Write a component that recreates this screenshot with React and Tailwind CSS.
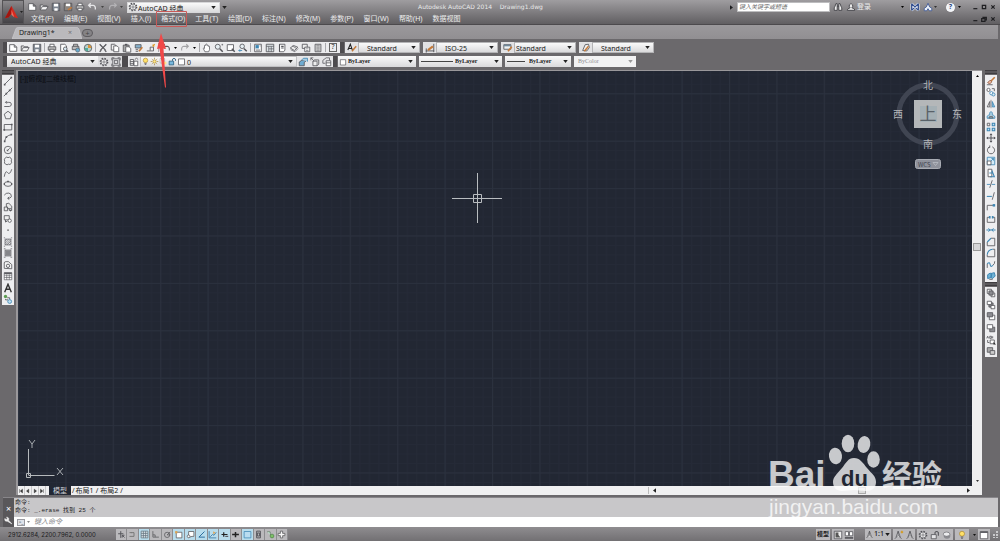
import React from "react";

const K = "#55555a";
const B = "#3f87b4";
const O = "#c47a3a";

const P = ({ d, c = K, f = "none", w = 1 }) => <path d={d} stroke={c} fill={f} strokeWidth={w} />;

const ICONS = {
  new: <P d="M2 2h5.5l3 3v5H2zM7.5 2v3h3" f="#fff" />,
  open: <><P d="M1.5 9.5v-6h3l1 1h4v1.5" f="#ddd" /><P d="M1.5 9.5l2.5-4h7l-2.500 4z" f="#f4f4f4" /></>,
  save: <><P d="M1.500 1.500h9v9h-9z" f="#7d8590" /><path d="M3.500 2h5v3.500h-5zM4 7.500h4v3H4z" fill="#fff" /></>,
  saveas: <><P d="M1.500 1.500h9v9h-9z" f="#8b8580" /><path d="M3.500 2h5v3h-5z" fill="#fff" /><P d="M6 9.500l4.500-3" c={O} w={2} /></>,
  print: <><P d="M3.500 5V1.500h5V5" f="#fff" /><P d="M1.500 4.500h9v4h-9z" f="#bbb" /><P d="M3.500 7.500h5v3h-5z" f="#fff" /></>,
  preview: <><P d="M2 1.500h5l2 2v7H2z" f="#fff" /><circle cx="7.500" cy="7" r="2.200" fill="#dcebf3" stroke={K} /><P d="M9 8.500l2 2" w={1.500} /></>,
  publish: <><P d="M3 4V1.500h5V4M1.500 4h8v4h-8z" f="#bbb" /><circle cx="8" cy="8.500" r="2.500" fill="#67a9cc" stroke={K} strokeWidth=".7" /></>,
  dwf: <><circle cx="6" cy="6" r="4.500" fill="#b6d2cf" stroke={K} /><path d="M6 6V2a4 4 0 0 1 4 4z" fill="#d9943b" /><path d="M2 6h4v4a4 4 0 0 1-4-4z" fill="#5a9" /></>,
  cut: <P d="M2 1.500l7 7M10 1.500l-7 7M2 10.500l2-2M10 10.500l-2-2" w={1.500} />,
  copy: <><P d="M1.500 1.500h4l2 2v5h-6z" f="#eee" /><P d="M4.500 3.500h4l2 2v5h-6z" f="#fff" /></>,
  paste: <><P d="M1.500 2.500h7v8h-7z" f="#aaa" /><P d="M4.500 4.500h4l2 2v4.500h-6z" f="#fff" /><P d="M3.500 2h3" w={2} /></>,
  match: <><P d="M1.500 2h7v4h-7z" f="#86b1cc" /><P d="M10 5L6 10" c={O} w={2} /><P d="M2 8h3M2 10h3" /></>,
  block: <><P d="M1 9.500h8V5H5v4" /><P d="M8 4l2.500-2.500M10 4l-2-2" c="#df9a22" w={1.300} /></>,
  undo: <P d="M4.500 1.500L2 4l2.500 2.500M2 4h5.500q3 .5 2.500 5" w={1.300} />,
  undoL: <P d="M4.500 1.500L2 4l2.500 2.500M2 4h5.500q3 .5 2.500 5" c="#e6e6e8" w={1.600} />,
  redo: <P d="M7.500 1.500L10 4l-2.500 2.500M10 4H4.500q-3 .5-2.500 5" c="#a2a2a5" w={1.300} />,
  redoL: <P d="M7.500 1.500L10 4l-2.500 2.500M10 4H4.500q-3 .5-2.500 5" c="#b4b3b6" w={1.400} />,
  pan: <P d="M3.500 10.500L1.500 6.500q.5-1 1.500 0V3q.8-1 1.500 0V1.800q.8-1 1.500 0V3q.8-.8 1.500 0v1q1-.8 1.500 0v4l-1 2.500z" f="#fff" w={0.900} />,
  zoomrt: <><circle cx="4.500" cy="4.500" r="3" fill="#e6eef2" stroke={K} /><P d="M7 7l3.500 3.500" w={1.800} /><P d="M9 2h2M10 1v2" w={0.700} /></>,
  zoomwin: <><P d="M1.500 2h7.500v7H1.500z" f="#fff" /><P d="M7 7l3.500 3.500" w={1.800} /></>,
  zoomprev: <><circle cx="5" cy="4" r="2.700" fill="#e6eef2" stroke={K} /><P d="M7 6.500l3.500 3.500" w={1.800} /><P d="M1 9h4M1 9l1.500-1.500M1 9l1.500 1.500" c={B} /></>,
  props: <><P d="M2 1.500h8v9H2z" f="#fff" /><path d="M3 2.500h4v4H3z" fill={B} /><P d="M3.500 8.500h5M8 3.500h1" /></>,
  dc: <><P d="M1.500 1.500h9v9h-9z" f="#dce3e6" /><P d="M1.500 4h9M4.500 4v6.500M7.500 4v6.500M4.500 7h6" w={0.800} /></>,
  palettes: <><P d="M3 1.500h6.500v7L8 10.500H3z" f="#fff" /><P d="M5 4h3M5 6h3M3 1.500v9" w={1.300} /></>,
  sheet: <><P d="M1.500 6l4-3 5 2-4 4z" f="#eee" /><P d="M2 8l5 2.500 4-4M4 3.500l5 3" w={0.800} /></>,
  markup: <><P d="M1.500 1.500h6v5h-6z" f="#eee" /><P d="M4.500 5h6v5.500h-6z" f="#fff" /><P d="M6 7h3M6 9h3" w={0.700} /></>,
  calc: <><P d="M2.500 1.500h7v9h-7z" f="#ddd" /><P d="M4 3.500h4M4 6h4M4 8.500h4" w={0.900} /></>,
  gear: <><circle cx="6" cy="6" r="4.300" fill="none" stroke={K} strokeWidth="1.800" strokeDasharray="1.700 1.677" /><circle cx="6" cy="6" r="3.500" fill="#fff" stroke={K} strokeWidth=".9" /><circle cx="6" cy="6" r="1.400" fill="none" stroke={K} strokeWidth=".9" /></>,
  ws: <><P d="M2 2h8v8H2z" w={0.800} /><P d="M1 4V1h3M8 1h3v3M11 8v3H8M4 11H1V8M4 4h4v4H4z" /></>,
  layers: <><P d="M1.500 3h4v7h-4zM1.500 5.500h4M1.500 8h4" f="#eee" /><P d="M6 5h4.500v5.500H6zM7 3l2-1.500 2 1.500" f="#fff" /></>,
  bulb: <><circle cx="6" cy="4.500" r="3" fill="#ffe169" stroke="#a8822a" strokeWidth=".8" /><P d="M4.500 8.500h3M5 10h2" /></>,
  sun: <><circle cx="6" cy="6" r="2.200" fill="#ffe789" stroke="#9c7b28" strokeWidth=".8" /><P d="M6 1v1.500M6 9.500V11M1 6h1.500M9.500 6H11M2.500 2.500l1 1M8.500 8.500l1 1M9.500 2.500l-1 1M3.500 8.500l-1 1" c="#9c7b28" /></>,
  vp: <><P d="M1.500 2h6v6h-6z" c="#aaa" f="#fff" /><circle cx="8" cy="8" r="2" fill="#ffe789" /></>,
  lock: <><P d="M1.500 5.500h6v5h-6z" c="#275b7c" f="#78b8dd" /><P d="M6 5V3q2-2.500 4 0v2" c="#275b7c" w={1.300} /></>,
  lockG: <><P d="M1.500 5.500h6v5h-6z" f="#e4e4e6" /><P d="M6 5V3q2-2.500 4 0v4" w={1.300} /></>,
  sq: <P d="M2 2.500h8v8H2z" f="#fff" />,
  lay1: <><P d="M1.500 6l3-2h6l-3 2.500v4h-6z" f="#6fabd0" /><P d="M4.500 3.500l2-2h5v4" f="#a9cde2" c={B} /></>,
  lay2: <><P d="M3.500 5l2-1.500h5v5L8.500 10.500h-5z" f="#eee" /><P d="M3.500 5h5v5.500M1 1h3M1 1v3M1 1l3 3" w={0.900} /></>,
  lay3: <><P d="M5 4.500h5.500v6H5zM5 7h5.500" f="#fff" /><P d="M1 7.500h3M1 7.500V4l4-3h4v3" w={0.900} /></>,
  textstyle: <><P d="M1 8.500L4 1.500l2.500 7M2 6.500h4" c="#222" w={1.300} /><P d="M11 4L6 10" c={O} w={1.800} /></>,
  dimstyle: <><P d="M1 9.500h10M1.500 6.500v5M10.500 1v10" w={1.100} /><P d="M9.500 4L3.500 8.500" c={O} w={2.500} /></>,
  tablestyle: <><P d="M1 2h8.500v5.500H1z" f="#eef3f5" /><P d="M1 3h8.500" w={2} c="#71899a" /><P d="M10.500 4.500L6 10" c={O} w={2} /></>,
  mlstyle: <><P d="M2 9l3-7 4-.5 1 4-3 4z" f="#eee" /><P d="M9 4L4 10" c={O} w={1.800} /></>,
  line: <><P d="M2 10l8-8" /><path d="M1 9.300h2v2H1zM9 1h2v2H9z" fill={K} /></>,
  xline: <><P d="M1 11L11 1" /><path d="M3 7h2v2H3zM7 3h2v2H7z" fill={K} /></>,
  pline: <P d="M1.500 9h6q3-.5 2.500-3T7 4H3M4.500 2.500L3 4l1.500 1.500" />,
  polygon: <P d="M6 1.500l4.500 3.500-1.800 5.500H3.300L1.500 5z" />,
  rect: <><P d="M1.500 3h9v6.500h-9z" /><path d="M.5 8.500h2v2h-2zM9.500 2h2v2h-2z" fill={K} /></>,
  arc: <><P d="M2 10q1-7 8-8" /><path d="M1 9h2v2H1zM3 4h2v2H3zM9 1h2v2H9z" fill={K} /></>,
  circle: <><circle cx="6" cy="6" r="4.500" fill="none" stroke={K} /><P d="M5 7l3-3M5 5.500v1.500h1.500" /></>,
  cloud: <P d="M3 2q1.500-1.500 3 0 2-1.500 3.500.5Q11 4.500 9.800 6q1.200 1.500 0 3-1.300 2-3.300.8-1.500 1.500-3.500 0Q1 8.500 2 6.500 .8 3.500 3 2z" />,
  spline: <P d="M1.500 10.500Q3 2 5.500 5.500T10.500 1.500" />,
  ellipse: <><ellipse cx="6" cy="6" rx="4.500" ry="2.800" fill="none" stroke={K} /><path d="M.7 5h1.800v2H.7zM9.500 5h1.800v2H9.500zM5 2.200h2v1.600H5z" fill={K} /></>,
  earc: <P d="M1.500 5q2-3 5.500-2.500T10 7q-1.500 2-4 1.800M7.500 7L5.500 8.800l2 1.500" />,
  insert: <><P d="M4 5V2l3-.5L10.500 5v3H6zM1.500 6h4v4.500h-4z" f="#e7e7e7" /><P d="M7 9l2 1.500L11 9" w={1.300} /></>,
  mkblock: <><P d="M1.500 2h6v5h-6z" f="#eee" /><circle cx="8" cy="8" r="2" fill="#fff" stroke={K} /><P d="M3 9h2M3 7v3" /></>,
  point: <path d="M5.300 5.300h1.500v1.500H5.300z" fill="#333" />,
  hatch: <><P d="M2.500 2.500h7v7h-7zM1 1h1.500M9.500 1H11M1 11h1.500M9.500 11H11M2.500 5l2.500-2.500M2.500 7.500l5-5M3 9.500l6.500-6.500M5 9.500l4.500-4.500M7.500 9.500l2-2" w={0.800} /></>,
  gradient: <><path d="M3 3h6v6H3z" fill="#86868a" /><P d="M2.500 2.500h7v7h-7zM1 1h2M9 1h2M1 11h2M9 11h2" w={0.900} /></>,
  region: <><P d="M1.500 10V3.500q0-1.500 2-1.500h3l4 3.500v5z" f="#f6f6f6" /><circle cx="6" cy="7" r="2" fill="none" stroke={K} /></>,
  table: <><P d="M1.500 2h9v8.500h-9zM1.500 5h9M1.500 7.700h9M4.500 4v6.500M7.500 4v6.500" f="#fff" w={0.800} /><P d="M1.500 2.700h9" w={1.700} /></>,
  mtext: <P d="M2 11L6 1.500l4 9.500M3.500 7.500h5" c="#333" w={1.700} />,
  addsel: <><circle cx="3" cy="3" r="2" fill="#5d9d51" /><P d="M5 4.500h3v2M3 6v1h3" /><circle cx="8" cy="9" r="2.300" fill="#bfe1f2" stroke={B} /></>,
  erase: <><P d="M10.500 1.500L6 6" c={O} w={2} /><P d="M2 8l3-3 2 2-2.500 2.500z" f="#eeb9a0" c="#8b543c" /><P d="M1 10.500h7" /></>,
  ccopy: <><circle cx="3" cy="3.500" r="1.900" fill="#fff" stroke={K} /><circle cx="6.500" cy="7.500" r="2" fill="#fff" stroke={B} /><circle cx="9" cy="9" r="1.800" fill="#d5ebf6" stroke={B} /><P d="M7 2h3v3" /></>,
  mirror: <><P d="M4.500 3v6.500H1.500z" f="#eee" /><P d="M7.500 3v6.500h3z" c={B} f="#8ec4e1" /><P d="M6 1v10" w={0.700} /></>,
  offset: <><P d="M1.500 10q-1-4 3-4V3q1.500-2 3 0v3q4 .5 3 4z" c={B} f="#b9d9e9" /><P d="M3.500 9.500q0-2 2.500-2t2.500 2z" /></>,
  array: <><P d="M1.500 1.500h3v3h-3z" /><P d="M7.500 1.500h3v3h-3zM1.500 7.500h3v3h-3zM7.500 7.500h3v3h-3z" c={B} f="#bfe0f0" w={1.300} /></>,
  move: <P d="M6 1v10M1 6h10M4.700 2.500L6 1l1.300 1.500M4.700 9.500L6 11l1.300-1.500M2.500 4.700L1 6l1.500 1.300M9.500 4.700L11 6 9.500 7.300" w={1.200} />,
  rotate: <P d="M7.500 2.200A4.300 4.300 0 1 1 4.500 2.200M4.500 .5v2.500H2.500" />,
  scale: <><P d="M1.500 1.500h9v9h-9z" c={B} f="#d4ebf7" /><P d="M1.500 6h4.500v4.500H1.500z" f="#fff" /><P d="M6 6l3-3M6.500 3H9v2.500" c={B} /></>,
  stretch: <><P d="M2.500 1.500H7v9H2.500z" f="#fff" /><P d="M7 3l3 7.500H5M4 6h4" c={B} w={1.300} /></>,
  trim: <><P d="M1 6.500h4M7 6.500h4" c={B} /><P d="M4.500 10.500l3-9" /></>,
  extend: <><P d="M1 6.500h6" c={B} w={1.300} /><P d="M7.500 10.500L10 1.500" /></>,
  brk1: <><P d="M1.500 10V4h8" /><path d="M8 2.500h3v3H8z" fill={B} /></>,
  brk: <><P d="M4 4H1.500v6h9V4H8" /><path d="M3.500 2.500h2v3h-2zM7 2.500h2v3H7z" fill={B} /></>,
  join: <P d="M.5 6h11M3 4l2 2-2 2M9 4L7 6l2 2" c={B} w={1.200} />,
  chamfer: <><P d="M1.500 10.500V6M6 1.500h4.500v9h-9" /><P d="M1.500 6L6 1.500" c={B} w={1.300} /></>,
  fillet: <><P d="M1.500 10.500V8M8 1.500h2.500v9h-9" /><P d="M1.500 8Q2 2 8 1.500" c={B} w={1.300} /></>,
  blend: <><P d="M1.500 9.500V4.500M8.500 6Q10.500 5 10.500 1.500" /><P d="M1.500 4.500q3-3 3.500 1t3.500.5" c={B} w={1.300} /></>,
  explode: <><P d="M2 4.500l3-2 2 1.500-1 4-4 1zM6 3l4-1 1 4-3 3-2-1z" c={B} f="#70b3d6" w={1.200} /><P d="M4 10h4" /></>,
  ord1: <><P d="M1.500 1.500h5v5h-5zM6 6h4.500v4.500H6z" f="#fff" /><P d="M3.500 3.500h5v5h-5z" f="#8c8c91" /></>,
  ord2: <><P d="M3.500 3.500h5v5h-5z" f="#8c8c91" /><P d="M1.500 1.500h5v4h-5zM6 6.500h4.500v4H6z" f="#fff" /></>,
  ord3: <><P d="M4 5h6.500v5.500H4z" f="#fff" /><P d="M1.500 2h6.500v5H1.500z" f="#8c8c91" /></>,
  ord4: <><P d="M4.500 5h6v5.500h-6z" f="#8c8c91" /><P d="M1.500 2h6.500v5H1.500z" f="#fff" /></>,
  ord5: <><P d="M1 4l1-2.500 1 2.500M4.500 1.500v2.500h2v-2.500zM8 1.500v2.500" /><P d="M5 6h5v4.500H5zM2 6v3h2" f="#fff" /><path d="M9 8.500l3 3H9z" fill="#222" /></>,
  ord6: <><P d="M1.500 2h6.500v5.500H1.500z" f="#aaa" /><P d="M5 5.500h5.500v4.500H5z" f="#ccc" /></>,
  infer: <P d="M5 1.500v9M1.500 5h7M7 7l3 3M7 10V7h3" w={1.300} />,
  snap: <P d="M2 3.500h6v5H2M4 3.500h1" w={1.300} c="#777" />,
  grid: <P d="M1.500 1.500h9v9h-9zM4.500 1.500v9M7.500 1.500v9M1.500 4.500h9M1.500 7.500h9" c="#61717c" f="#dbe6ec" />,
  ortho: <P d="M2.500 1.500v8h8M2.500 6.500H5.500v3" />,
  polar: <><circle cx="5.500" cy="6.500" r="3.500" fill="none" stroke={K} /><P d="M5.500 6.500l4-4M5.500 6.500h4" /></>,
  osnap: <><P d="M3 3h7.500v7.500H3z" f="#fff" /><path d="M1.500 1.500h3v3h-3z" fill="#e0a24b" /></>,
  osnap3: <><P d="M3.500 2h7v6.500L8 8.500 3.500 10z" f="#fff" /><circle cx="3.500" cy="8.500" r="1.800" fill="#fff" stroke={K} /></>,
  otrack: <P d="M10 2L2.500 9.500H10.500" c="#2a6d9c" w={1.300} />,
  ducs: <><P d="M1.500 1.500v9h9.500M3 9l3-3 2 1 3-4" c="#2a6d9c" /><path d="M7 1.500l3 2-3 2z" fill="#e0a24b" /></>,
  dyn: <><P d="M2 6h8M5 3v6" c="#222" w={1.600} /><P d="M7 8.500h4" w={1.500} /></>,
  lwt: <P d="M1.500 6h9M6 2.500v7" c="#222" w={2} />,
  tpy: <P d="M1.500 2h9v8.500h-9z" c={B} f="#b9dcf0" />,
  qp: <P d="M3.500 1.500h5v9h-5zM4.500 4h3v4h-3z" w={1.300} />,
  sc: <><P d="M1.500 2.500h4v3l2 2" f="#dfe" c="#57745a" /><circle cx="8" cy="8" r="2.500" fill="#7cc266" stroke="#41763a" strokeWidth=".8" /></>,
  am: <P d="M4.500 1.500h3v3h3v3h-3v3h-3v-3h-3v-3h3z" f="#f6f6f6" />,
  qv1: <><P d="M1.500 1.500h9v9h-9z" f="#eee" /><path d="M3 3h3.500v3L9 9H3z" fill="#555" /></>,
  qv2: <><P d="M1.500 2h4v5h-4zM6.500 2h4v5h-4z" f="#fff" /><P d="M1 9.500h10" w={2} /></>,
  anno: <P d="M6 1.500v5M6 6.500L2 10.500M6 6.500l4 4M3.500 8.500L6 1.500l2.500 7" f="#eee" />,
  annoy: <><P d="M5 1.500v5M5 6.500l-4 4M5 6.500l4 4M2.500 8.500L5 1.500l2.500 7" f="#eee" /><P d="M8 2.500h3M9.500 1v3" c="#d49b1f" w={1.600} /></>,
  cube: <><ellipse cx="6" cy="7" rx="4" ry="3.500" fill="#8b8b90" /><ellipse cx="5.500" cy="5" rx="4" ry="2.500" fill="#ececee" stroke={K} strokeWidth=".7" /></>,
  max: <><P d="M1.500 2h9v8.500h-9z" f="#fff" /><P d="M1.500 2.700h9" w={1.600} /></>,
  binoc: <P d="M2.500 5L3.500 2h1.500v8H1.500V7zM9.500 5L8.500 2H7v8h3.500V7zM5 5h2" f="#eee" c="#3b3b40" />,
  user: <P d="M4 3.500q2-3.500 4 0Q8.500 6 7 7q4 .5 3.500 3h-9Q1.500 7.500 5 7 3.500 6 4 3.500z" f="#e8e8e8" c="#3b3b40" />,
  xchg: <><P d="M2 2l8 8M10 2l-8 8M2 2v8M10 2v8" c="#dfe6f2" w={3} /><P d="M2 2l8 8M10 2l-8 8M2 2v8M10 2v8" c="#34508f" w={1.500} /></>,
  a360: <P d="M6 1.500l2 4.500 2.500 1.500v3H7.500L6 8l-1.500 2.500h-3v-3L4 6z" f="#e9eff8" c="#3d5795" />,
  wrench: <P d="M10.500 10.500L6 5.500Q7.500 2 3.500 1.500L4.500 3.500l-1.500 1-2-1q-.5 4 3.500 3.500z" c="#eee" f="#eee" w={0.800} />,
};

const Icon = ({ n, className = "size-[11px]" }) => (
  <svg viewBox="0 0 12 12" className={"shrink-0 " + className} aria-hidden="true">{ICONS[n]}</svg>
);

const Btn = ({ n, className = "w-3 h-[11px]", size }) => (
  <button type="button" aria-label={n} className={"flex shrink-0 items-center justify-center " + className}>
    <Icon n={n} className={size || "size-[10px]"} />
  </button>
);

const Caret = ({ className = "text-[#222]" }) => (
  <svg viewBox="0 0 6 4" className={"h-[3px] w-[5px] shrink-0 " + className} aria-hidden="true">
    <path d="M0 0h6L3 4z" fill="currentColor" />
  </svg>
);

const SmallCaret = ({ className = "text-[#333]" }) => (
  <svg viewBox="0 0 6 4" className={"h-[2px] w-[3px] shrink-0 " + className} aria-hidden="true">
    <path d="M0 0h6L3 4z" fill="currentColor" />
  </svg>
);

const Sep = () => <span className="mx-px h-[9px] w-px shrink-0 bg-[#a9a9ad]" />;
const Grip = ({ className = "w-1" }) => <span className={"h-[11px] shrink-0 bg-[#4d4b4e] " + className} />;

function Combo({ label, value, className, text = "text-[7px]", pad = "pl-1", children, disabled }) {
  return (
    <span
      className={
        "flex h-[11px] shrink-0 items-center pr-[3px] " +
        (disabled ? "bg-[#f2f2f3] text-[#8d8d90] " : "bg-linear-to-b from-[#fafafa] to-[#dadadc] text-[#222] ") +
        className
      }
    >
      {children}
      <select
        aria-label={label}
        disabled={disabled}
        defaultValue={value}
        className={"h-full min-w-0 flex-1 appearance-none bg-transparent leading-[11px] outline-none " + text + " " + pad}
      >
        <option>{value}</option>
      </select>
      <Caret className={disabled ? "text-[#999]" : "text-[#222]"} />
    </span>
  );
}

const Rule = ({ className }) => <span className={"h-px shrink-0 bg-[#444] " + className} />;

const MENUS = ["文件(F)", "编辑(E)", "视图(V)", "插入(I)", "格式(O)", "工具(T)", "绘图(D)", "标注(N)", "修改(M)", "参数(P)", "窗口(W)", "帮助(H)", "数据视图"];
const STD = [["new", "open", "save"], ["print", "preview", "publish", "dwf"], ["cut", "copy", "paste", "match", "block"]];
const STD2 = [["pan", "zoomrt", "zoomwin", "zoomprev"], ["props", "dc", "palettes", "sheet", "markup", "calc"]];
const DRAW = ["line", "xline", "pline", "polygon", "rect", "arc", "circle", "cloud", "spline", "ellipse", "earc", "insert", "mkblock", "point", "hatch", "gradient", "region", "table", "mtext", "addsel"];
const MODIFY = ["erase", "ccopy", "mirror", "offset", "array", "move", "rotate", "scale", "stretch", "trim", "extend", "brk1", "brk", "join", "chamfer", "fillet", "blend", "explode"];
const ORDER = ["ord1", "ord2", "ord3", "ord4", "ord5", "ord6"];
const MODES = [["infer", 0], ["snap", 0], ["grid", 1], ["ortho", 0], ["polar", 0], ["osnap", 1], ["osnap3", 1], ["otrack", 1], ["ducs", 1], ["dyn", 1], ["lwt", 0], ["tpy", 1], ["qp", 0], ["sc", 0], ["am", 0]];
const STYLES = [["textstyle", "Standard", "文字样式", "pl-2"], ["dimstyle", "ISO-25", "标注样式", "pl-2"], ["tablestyle", "Standard", "表格样式", "pl-px"], ["mlstyle", "Standard", "多重引线样式", "pl-2"]];

function WindowButtons({ restore }) {
  return (
    <div className="flex items-center gap-[3px] text-[#1f1f22]">
      {["M2 7h6", restore ? "M1 4h5v4H1zM3 4V2h5v4H6" : "M2 2h5v5H2z", "M2 2l5 5M7 2L2 7"].map((d, i) => (
        <button key={i} type="button" aria-label={["最小化", "还原", "关闭"][i]} className="size-[6px]">
          <svg viewBox="0 0 9 9" className="size-[6px]">
            <path d={d} fill="none" stroke="currentColor" strokeWidth="1.800" />
          </svg>
        </button>
      ))}
    </div>
  );
}

function Header() {
  return (
    <header className="flex h-[25px] shrink-0 border-b border-[#4c4a4d] bg-linear-to-b from-[#9f9da0] to-[#615f62]">
      <button type="button" aria-label="应用程序菜单" className="ml-[2px] flex h-6 w-[22px] items-center justify-center gap-px border border-[#555356] bg-linear-to-b from-[#8b898c] to-[#444246]">
        <svg viewBox="0 0 16 16" className="size-[15px]">
          <path d="M8 1L1 14l4-1 3-4 3 4 4 1z" fill="#d42a20" />
          <path d="M8 1L1 14l4-1 3-4z" fill="#a01610" />
          <path d="M8 5l3 8-3-2.500z" fill="#f2705f" />
        </svg>
        <SmallCaret className="text-[#222]" />
      </button>
      <div className="flex min-w-0 flex-1 flex-col pr-1">
        <div className="flex h-[14px] items-center">
          <div className="flex items-center pl-[2px]">
            {["new", "open", "save", "saveas", "print", "undoL"].map((n) => <Btn key={n} n={n} className="h-3 w-[12px]" />)}
            <SmallCaret className="mx-[3px] text-[#444]" />
            <Btn n="redoL" className="h-3 w-3" />
            <SmallCaret className="mr-[4px] ml-px text-[#444]" />
          </div>
          <Combo label="工作空间" value="AutoCAD 经典" className="w-[93px] border border-[#d7d7d9]" pad="pl-0"><Icon n="gear" className="size-[10px]" /></Combo>
          <Caret className="ml-[2px] text-[#222]" />
          <h1 className="flex-1 pl-1 text-center font-['DejaVu_Sans','Noto_Sans_CJK_SC',sans-serif] text-[6px] leading-[14px] whitespace-pre text-[#e9e9ea]">Autodesk AutoCAD 2014    Drawing1.dwg</h1>
          <svg viewBox="0 0 4 6" className="h-[5px] w-[3px]"><path d="M0 0l4 3-4 3z" fill="#1c1c1e" /></svg>
          <input aria-label="搜索" placeholder="键入关键字或短语" className="ml-1 h-[10px] w-[93px] border border-[#bdbdbf] bg-white px-px text-[6px] italic outline-none placeholder:text-[#666]" />
          <Btn n="binoc" className="ml-px w-[13px]" />
          <Btn n="user" className="w-[13px]" />
          <button type="button" className="text-[7px] text-[#ececed]">登录</button>
          <SmallCaret className="mr-[4px] ml-[30px]" />
          <Btn n="xchg" className="w-[13px]" />
          <Btn n="a360" className="w-[13px]" />
          <SmallCaret />
          <button type="button" aria-label="帮助" className="mr-[3px] ml-[9px] flex size-[9px] items-center justify-center rounded-full border border-white bg-[#eef2f8] text-[7px] font-bold text-[#26457f]">?</button>
          <SmallCaret className="mr-[11px]" />
          <WindowButtons />
        </div>
        <div className="flex h-[11px] items-center justify-between">
          <nav className="flex gap-[10px] pl-[7px] font-['Liberation_Sans','Noto_Sans_CJK_SC',sans-serif] text-[7px] leading-[10px] text-[#ededee]">
            {MENUS.map((m) => (
              <button key={m} type="button" className="whitespace-nowrap">{m}</button>
            ))}
          </nav>
          <WindowButtons restore />
        </div>
      </div>
    </header>
  );
}

function DrawingTabs() {
  return (
    <div className="mr-[2px] flex h-[14px] shrink-0 items-end bg-linear-to-b from-[#9b999c] to-[#918f92] pl-3">
      <div className="relative flex h-[12px] w-[70px] items-center">
        <svg viewBox="0 0 70 12" preserveAspectRatio="none" className="absolute inset-0 size-full">
          <path d="M0 12L4 1.500Q5 0 7 0H63Q66 0 67 2L70 12z" fill="#bab9bc" stroke="#d0cfd1" strokeWidth=".6" />
        </svg>
        <button type="button" className="relative flex-1 pl-[7px] text-left text-[7px] leading-3 text-[#222]">Drawing1*</button>
        <button type="button" aria-label="关闭" className="relative mr-[10px] text-[7px] leading-3 text-[#707073]">×</button>
      </div>
      <button type="button" aria-label="新建" className="mb-[2px] flex h-[8px] w-[11px] items-center justify-center rounded-sm border border-[#5d5b5e] bg-[#858386] text-[7px] leading-none text-[#444]">+</button>
    </div>
  );
}

function Toolbars() {
  const bold = "text-[6px] font-bold font-['Liberation_Serif',serif]";
  return (
    <div className="flex shrink-0 flex-col gap-[3px] bg-[#6b696c] pt-[3px] pb-[3px] pl-[3px]">
      <div className="flex">
        <Grip />
        <div className="flex h-[11px] items-center bg-[#ececee] pr-px">
          {STD.map((g, i) => <React.Fragment key={i}>{g.map((n) => <Btn key={n} n={n} />)}<Sep /></React.Fragment>)}
          <Btn n="undo" /><SmallCaret className="mx-[2px]" /><Btn n="redo" /><SmallCaret className="mx-[2px]" /><Sep />
          {STD2.map((g, i) => <React.Fragment key={i}>{g.map((n) => <Btn key={n} n={n} />)}<Sep /></React.Fragment>)}
          <button type="button" aria-label="帮助" className="flex h-[11px] w-3 items-center justify-center"><span className="flex h-[9px] w-2 items-center justify-center border border-[#666] text-[7px] text-[#333]">?</span></button>
        </div>
        <Grip className="mr-px w-[4px]" />
        <div className="flex gap-[3px]">
          {STYLES.map(([ic, v, l, p], i) => (
            <div key={i} className="flex bg-[#e2e2e4]">
              <Btn n={ic} className="h-[11px] w-[13px]" />
              <Combo label={l} value={v} className="w-[62px] border border-[#b4b4b6]" pad={p} />
            </div>
          ))}
        </div>
      </div>
      <div className="flex">
        <Grip />
        <Combo label="工作空间工具栏" value="AutoCAD 经典" className="w-[91px]" pad="pl-1" />
        <div className="flex bg-[#dcdcde]"><Btn n="gear" /><Btn n="ws" /></div>
        <Grip className="w-[6px]" />
        <div className="flex bg-[#e6e6e8]"><Btn n="layers" />
          <Combo label="图层" value="0" className="w-[157px] border border-[#c0c0c2]" pad="pl-px">
            {["bulb", "sun", "vp", "lock", "sq"].map((n) => <Icon key={n} n={n} className="size-[9px]" />)}
          </Combo>
          <Btn n="lay1" /><Btn n="lay2" /><Btn n="lay3" />
        </div>
        <Grip className="mr-px w-[4px]" />
        <div className="flex gap-[3px]">
          <Combo label="颜色" value="ByLayer" className="w-[78px]" text={bold} pad="pl-px"><Icon n="sq" className="ml-px size-2" /></Combo>
          <Combo label="线型" value="ByLayer" className="w-[83px]" text={bold} pad="pl-[2px]"><Rule className="ml-[2px] w-8" /></Combo>
          <Combo label="线宽" value="ByLayer" className="w-[66px]" text={bold} pad="pl-1"><Rule className="ml-[2px] w-[18px]" /></Combo>
          <Combo label="打印样式" value="ByColor" className="w-[62px]" text="text-[6px] font-['Liberation_Serif',serif]" pad="pl-1" disabled />
        </div>
      </div>
    </div>
  );
}

function SideBar({ groups, className }) {
  return (
    <aside className={"flex shrink-0 flex-col " + className}>
      {groups.map(([h, list], i) => (
        <div key={i}>
          <div className="mb-px h-1 border-y border-[#3f3d40] bg-[#5a585b]" />
          <div className={"flex flex-col bg-[#eeeef0] " + h}>
            {list.map((n) => <Btn key={n} n={n} className="min-h-0 w-full flex-1" size="size-[10px]" />)}
          </div>
        </div>
      ))}
    </aside>
  );
}

function Compass() {
  return (
    <svg viewBox="0 0 76 96" className="absolute top-[6px] right-[6px] h-24 w-[76px] font-['Noto_Sans_CJK_SC',sans-serif]">
      <circle cx="38" cy="37" r="29" fill="none" stroke="#404552" strokeWidth="5" />
      <rect x="24" y="23" width="28" height="28" fill="#b4b7b9" />
      <rect x="30" y="29" width="17" height="16" fill="#a5b0b5" />
      <g textAnchor="middle" fontSize="10" fill="#b5b6b9">
        <text x="38" y="12">北</text>
        <text x="38" y="71">南</text>
        <text x="8" y="41">西</text>
        <text x="67" y="41">东</text>
        <text x="38" y="43" fontSize="17" fill="#596168">上</text>
      </g>
      <rect x="25.500" y="82.500" width="25" height="9" rx="2" fill="#8f929c" stroke="#a9acb4" />
      <text x="28" y="89.500" fontSize="6" fill="#3d424f">WCS</text>
      <path d="M43 85.500h5l-2.500 3z" fill="none" stroke="#b9bcc4" strokeWidth=".8" />
    </svg>
  );
}

function Canvas() {
  return (
    <main className="relative min-h-0 flex-1 overflow-hidden bg-[#222733]">
      <svg className="absolute inset-0 size-full" aria-hidden="true">
        <defs>
          <pattern id="minor" width="9.480" height="9.480" y="22.300" patternUnits="userSpaceOnUse">
            <path d="M0 .5h9.480M.5 0v9.480" stroke="#252a37" />
          </pattern>
          <pattern id="major" width="47.400" height="47.400" y="22.300" patternUnits="userSpaceOnUse">
            <path d="M0 .5h47.400M.5 0v47.400" stroke="#2b313e" />
          </pattern>
        </defs>
        <rect width="100%" height="100%" fill="url(#minor)" />
        <rect width="100%" height="100%" fill="url(#major)" />
        <path d="M434 127.500h50M459.500 102v50M455.500 123.500h8v8h-8z" fill="none" stroke="#b9bdc0" />
      </svg>
      <p className="relative pl-[2px] font-['Liberation_Sans','Noto_Sans_CJK_SC',sans-serif] text-[7px] leading-4 text-[#0b0d12]">[-][俯视][二维线框]</p>
      <svg viewBox="0 0 50 50" className="absolute bottom-px left-[6px] size-[50px]" aria-hidden="true">
        <path d="M4.500 14v26M4.500 40.500h26M2.500 38.500h4v4h-4z" fill="none" stroke="#b6babd" />
        <path d="M33 33l6 7M39 33l-6 7M5 5l3 4 3-4M8 9v4" fill="none" stroke="#b6babd" strokeWidth=".9" />
      </svg>
      <Compass />
    </main>
  );
}

function LayoutTabs() {
  return (
    <div className="flex h-[9px] shrink-0 items-center bg-[#f0f0f1] text-[7px] leading-[9px] text-[#222]">
      <div className="flex">
        {["M2 1v5M6 1L3 3.500 6 6z", "M5 1L2 3.500 5 6z", "M3 1l3 2.500L3 6z", "M6 1v5M2 1l3 2.500L2 6z"].map((d, i) => (
          <button key={i} type="button" aria-label={["首个", "上一个", "下一个", "末个"][i]} className="flex h-[9px] w-[7px] items-center justify-center border-r border-[#c9c9cb]">
            <svg viewBox="0 0 8 7" className="size-[6px]"><path d={d} fill="#333" stroke="#333" strokeWidth=".6" /></svg>
          </button>
        ))}
      </div>
      <button type="button" className="ml-[3px] h-[9px] bg-[#222733] px-[4px] text-[#cfd0d3]">模型</button>
      <span className="px-px">/</span>
      <button type="button" className="h-[9px]">布局1</button>
      <span className="px-[2px]">/</span>
      <button type="button" className="h-[9px]">布局2</button>
      <span className="px-[2px]">/</span>
      <div className="ml-auto flex w-[334px] items-center justify-between border-l border-[#bbb] pr-3 pl-1">
        <svg viewBox="0 0 4 6" className="h-[5px] w-[3px]"><path d="M4 0L0 3l4 3z" fill="#222" /></svg>
        <span className="mr-[101px] ml-auto h-[7px] w-2 border border-[#aaa] bg-[#ddd]" />
        <svg viewBox="0 0 4 6" className="h-[5px] w-[3px]"><path d="M0 0l4 3-4 3z" fill="#222" /></svg>
      </div>
    </div>
  );
}

function CommandLine() {
  return (
    <section className="mr-[2px] ml-[3px] flex shrink-0 border-t border-[#88868a] bg-[#c8c7c9]">
      <div className="flex w-[11px] flex-col items-center justify-end gap-[3px] bg-[#59575a] pb-[2px]">
        <button type="button" aria-label="关闭" className="text-[9px] leading-[8px] text-white">×</button>
        <Btn n="wrench" className="size-[9px]" size="size-[9px]" />
      </div>
      <div className="min-w-0 flex-1">
        <div className="h-[19px] pt-px pl-px font-['Liberation_Mono','Noto_Sans_CJK_SC',monospace] text-[6px] leading-[8px] text-[#1c1c1e]">
          <p>命令:</p>
          <p className="whitespace-pre">命令: _.erase 找到 25 个</p>
        </div>
        <label className="flex h-[10px] items-center gap-[2px] bg-white pl-[3px]">
          <span className="flex h-[7px] w-2 items-center justify-center border border-[#9a9aa0] bg-[#dfe3ea] text-[5px] leading-none text-[#444]">&gt;_</span>
          <SmallCaret className="text-[#888]" />
          <input aria-label="命令" placeholder="键入命令" className="h-[9px] min-w-0 flex-1 pl-[2px] text-[7px] italic outline-none placeholder:text-[#8b8b8e]" />
        </label>
      </div>
    </section>
  );
}

function StatusBar() {
  return (
    <footer className="flex h-[14px] shrink-0 items-center bg-linear-to-b from-[#8f8d90] to-[#727073] pt-px pr-[2px] pl-2 text-[#1c1c1e]">
      <output className="w-[108px] font-['Inter','Noto_Sans',sans-serif] text-[6px] whitespace-nowrap">2912.6284, 2200.7962, 0.0000</output>
      <div className="flex w-[172px]">
        {MODES.map(([n, on]) => (
          <button key={n} type="button" aria-label={n} className={"flex h-[11px] flex-1 items-center justify-center border-r border-[#8d8d90] " + (on ? "bg-[#b8dcec]" : "bg-[#bab9bc]")}>
            <Icon n={n} className="size-[9px]" />
          </button>
        ))}
      </div>
      <div className="ml-auto flex items-center">
        <button type="button" className="mr-[2px] h-[11px] bg-[#bab9bc] px-px text-[6px] leading-[11px] font-bold">模型</button>
        <div className="flex bg-[#bab9bc]"><Btn n="qv1" className="size-[11px]" /><Btn n="qv2" className="size-[11px]" /></div>
        <div className="ml-[11px] flex h-[11px] items-center bg-[#bab9bc]">
          <Btn n="anno" className="h-[11px] w-[9px]" size="size-[9px]" /><span className="text-[7px] font-medium">1:1</span><Caret className="mx-px" />
        </div>
        <div className="ml-[2px] flex bg-[#bab9bc]"><Btn n="annoy" className="size-[11px]" /><Btn n="anno" className="size-[11px]" /></div>
        <div className="ml-[2px] flex bg-[#bab9bc]"><Btn n="gear" /><Btn n="lockG" /><Btn n="cube" /></div>
        <div className="mr-[4px] ml-[2px] flex bg-[#bab9bc]"><Btn n="bulb" className="h-[11px] w-[14px]" /></div>
        <SmallCaret className="mr-[2px] text-[#111]" />
        <Btn n="max" className="mr-px h-[11px] w-3 bg-[#bab9bc]" />
        <svg viewBox="0 0 7 7" className="size-[7px]"><path d="M5 0h2v2H5zM5 3h2v2H5zM2 3h2v2H2zM5 6h2v1H5zM2 6h2v1H2z" fill="#c9c9cb" /></svg>
      </div>
    </footer>
  );
}

function Watermark() {
  return (
    <div className="pointer-events-none absolute right-[53px] bottom-[18px] opacity-75">
      <svg viewBox="0 0 180 90" className="h-[90px] w-[180px]" fill="#fff">
        <text x="1" y="54" fontSize="37" fontWeight="700" fontFamily="Liberation Sans, sans-serif">Bai</text>
        <ellipse cx="68.500" cy="23" rx="6.500" ry="8.300" transform="rotate(-8 68.500 23)" />
        <ellipse cx="81" cy="10.500" rx="6.300" ry="8.800" />
        <ellipse cx="97" cy="11.500" rx="6.300" ry="8.500" transform="rotate(10 97 11.500)" />
        <ellipse cx="106.500" cy="26.500" rx="6.300" ry="8.300" />
        <path d="M87 25c6 0 9 5 13 10 5 6 9 8 9 14s-4 9-10 9c-5 0-8-1-12-1s-7 1-12 1c-6 0-9-4-9-9s4-8 9-14c4-5 6-10 12-10z" />
        <text x="74" y="53" fontSize="22" fontWeight="700" fontFamily="Liberation Sans, sans-serif" fill="#222733">du</text>
        <text x="115" y="53" fontSize="30" fontWeight="700" fontFamily="Noto Sans CJK SC, sans-serif">经验</text>
        <text x="2" y="81" fontSize="21" fontFamily="Liberation Sans, sans-serif">jingyan.baidu.com</text>
      </svg>
    </div>
  );
}

export default function App() {
  return (
    <div className="relative flex h-screen flex-col overflow-hidden bg-[#6b696c] font-['Noto_Sans','Noto_Sans_CJK_SC',sans-serif]">
      <Header />
      <DrawingTabs />
      <Toolbars />
      <div className="flex min-h-0 flex-1">
        <SideBar className="w-4 px-[2px]" groups={[["h-[230px]", DRAW]]} />
        <div className="flex min-w-0 flex-1 flex-col border-t border-l-2 border-[#9a989b]">
          <div className="flex min-h-0 flex-1">
            <Canvas />
            <div className="flex w-[10px] flex-col items-center bg-[#efeff0] py-1">
              <SmallCaret className="rotate-180" />
              <span className="flex-[42]" />
              <span className="h-2 w-2 border border-[#999] bg-[#d6d6d8]" />
              <span className="flex-[58]" />
              <SmallCaret />
            </div>
          </div>
          <LayoutTabs />
        </div>
        <SideBar className="mx-[3px] w-3" groups={[["h-[207px]", MODIFY], ["h-[70px]", ORDER]]} />
      </div>
      <div className="h-[2px] shrink-0" />
      <CommandLine />
      <StatusBar />
      <svg viewBox="0 0 40 80" className="pointer-events-none absolute top-[10px] left-[150px] h-20 w-10" aria-hidden="true">
        <path d="M6.500 1.500h30v15h-30z" fill="none" stroke="#c95a58" />
        <path d="M11 23l5 16-2.500-.5 2.500 39h-1L9.500 38.500 7 39z" fill="#f04848" />
      </svg>
      <Watermark />
    </div>
  );
}
